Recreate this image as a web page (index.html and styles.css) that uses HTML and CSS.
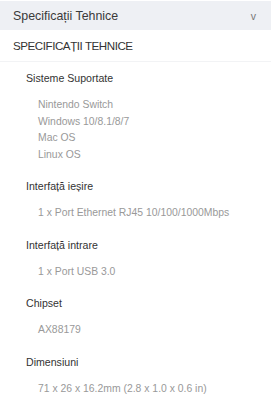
FILE: index.html
```html
<!DOCTYPE html>
<html lang="ro">
<head>
<meta charset="utf-8">
<link rel="stylesheet" href="styles.css">
</head>
<body>
<div class="acc-head">
  <span class="acc-title">Specificații Tehnice</span>
  <span class="acc-caret">v</span>
</div>
<div class="sec-title">SPECIFICAȚII TEHNICE</div>
<div class="specs">
  <div class="group">
    <div class="label">Sisteme Suportate</div>
    <ul class="items">
      <li>Nintendo Switch</li>
      <li>Windows 10/8.1/8/7</li>
      <li>Mac OS</li>
      <li>Linux OS</li>
    </ul>
  </div>
  <div class="group">
    <div class="label">Interfață ieșire</div>
    <ul class="items"><li>1 x Port Ethernet RJ45 10/100/1000Mbps</li></ul>
  </div>
  <div class="group">
    <div class="label">Interfață intrare</div>
    <ul class="items"><li>1 x Port USB 3.0</li></ul>
  </div>
  <div class="group">
    <div class="label">Chipset</div>
    <ul class="items"><li>AX88179</li></ul>
  </div>
  <div class="group">
    <div class="label">Dimensiuni</div>
    <ul class="items"><li>71 x 26 x 16.2mm (2.8 x 1.0 x 0.6 in)</li></ul>
  </div>
</div>
</body>
</html>
```
FILE: styles.css
```css
html, body {
  margin: 0;
  padding: 0;
  background: #ffffff;
  font-family: "Liberation Sans", Arial, sans-serif;
  color: #333;
}
body {
  padding-top: 1px;
}
.acc-head {
  display: flex;
  justify-content: space-between;
  align-items: center;
  height: 29px;
  background: #eef0f4;
  padding: 0 13px;
}
.acc-title {
  font-size: 12.4px;
  color: #3a3a3a;
}
.acc-caret {
  font-size: 10.5px;
  color: #777;
  margin-right: 2px;
}
.sec-title {
  font-size: 11.6px;
  letter-spacing: -0.45px;
  color: #333;
  padding: 9px 13px 0;
  height: 22px;
  border-bottom: 1px solid #f2f3f5;
}
.specs {
  padding: 8px 0 0 26px;
  display: flex;
  flex-direction: column;
  gap: 15px;
}
.label {
  font-size: 10.6px;
  color: #333;
  line-height: 16px;
}
.items {
  list-style: none;
  margin: 11px 0 0 12px;
  padding: 0;
}
.items li {
  font-size: 10.4px;
  color: #999;
  line-height: 16.5px;
}
```
